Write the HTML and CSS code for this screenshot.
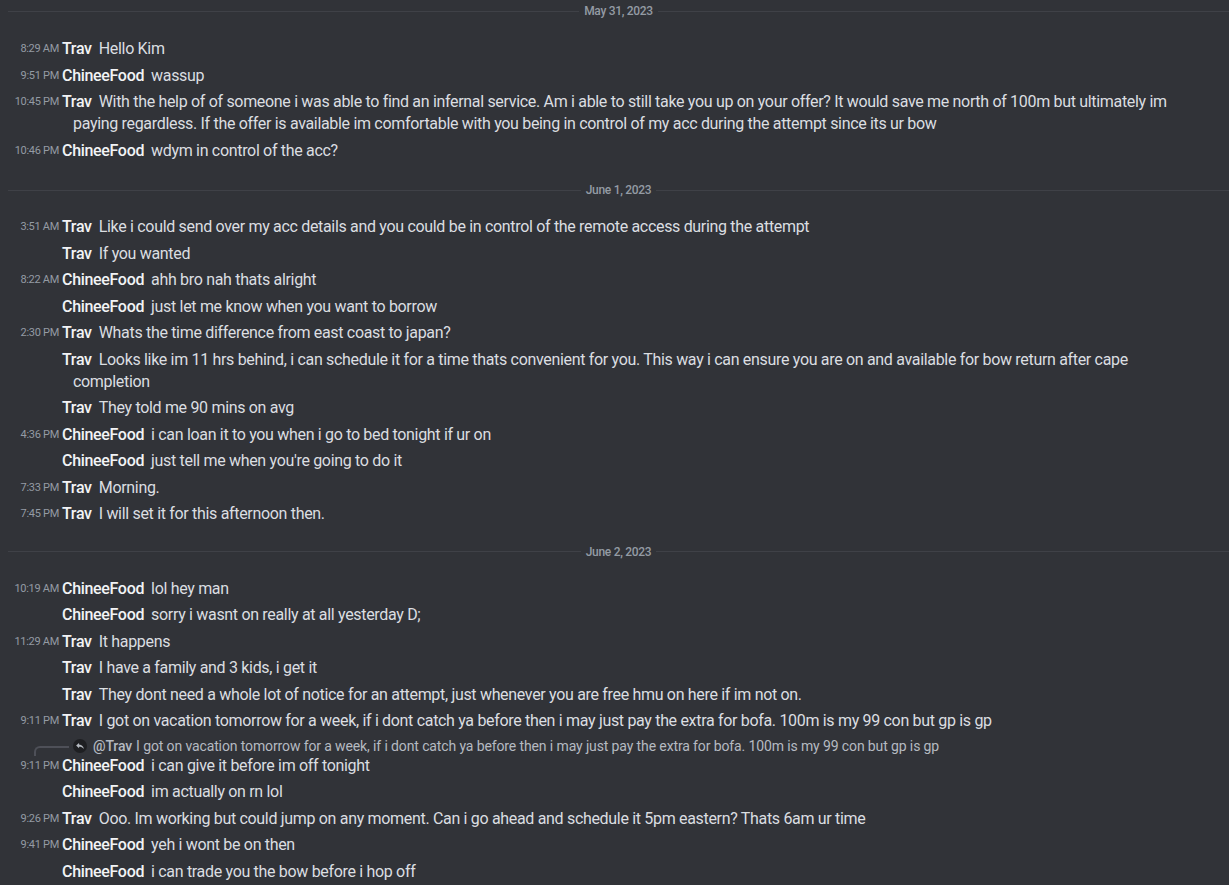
FILE: index.html
```html
<!DOCTYPE html>
<html lang="en">

<head>
    <meta charset="UTF-8">
    <meta name="viewport" content="width=device-width, initial-scale=1.0">
    <title>Trav / ChineeFood</title>
    <link rel="stylesheet" href="styles.css">
</head>

<body>
    <main class="chat">
        <div class="divider first"><span>May 31, 2023</span></div>

        <div class="msg"><time>8:29 AM</time><b class="name">Trav</b>Hello Kim</div>
        <div class="msg"><time>9:51 PM</time><b class="name">ChineeFood</b>wassup</div>
        <div class="msg"><time>10:45 PM</time><b class="name">Trav</b>With the help of of someone i was able to find an infernal service. Am i able to still take you up on your offer? It would save me north of 100m but ultimately im paying regardless. If the offer is available im comfortable with you being in control of my acc during the attempt since its ur bow</div>
        <div class="msg"><time>10:46 PM</time><b class="name">ChineeFood</b>wdym in control of the acc?</div>

        <div class="divider wide"><span>June 1, 2023</span></div>

        <div class="msg"><time>3:51 AM</time><b class="name">Trav</b>Like i could send over my acc details and you could be in control of the remote access during the attempt</div>
        <div class="msg"><time></time><b class="name">Trav</b>If you wanted</div>
        <div class="msg"><time>8:22 AM</time><b class="name">ChineeFood</b>ahh bro nah thats alright</div>
        <div class="msg"><time></time><b class="name">ChineeFood</b>just let me know when you want to borrow</div>
        <div class="msg"><time>2:30 PM</time><b class="name">Trav</b>Whats the time difference from east coast to japan?</div>
        <div class="msg"><time></time><b class="name">Trav</b>Looks like im 11 hrs behind, i can schedule it for a time thats convenient for you. This way i can ensure you are on and available for bow return after cape completion</div>
        <div class="msg"><time></time><b class="name">Trav</b>They told me 90 mins on avg</div>
        <div class="msg"><time>4:36 PM</time><b class="name">ChineeFood</b>i can loan it to you when i go to bed tonight if ur on</div>
        <div class="msg"><time></time><b class="name">ChineeFood</b>just tell me when you're going to do it</div>
        <div class="msg"><time>7:33 PM</time><b class="name">Trav</b>Morning.</div>
        <div class="msg"><time>7:45 PM</time><b class="name">Trav</b>I will set it for this afternoon then.</div>

        <div class="divider"><span>June 2, 2023</span></div>

        <div class="msg"><time>10:19 AM</time><b class="name">ChineeFood</b>lol hey man</div>
        <div class="msg"><time></time><b class="name">ChineeFood</b>sorry i wasnt on really at all yesterday D;</div>
        <div class="msg"><time>11:29 AM</time><b class="name">Trav</b>It happens</div>
        <div class="msg"><time></time><b class="name">Trav</b>I have a family and 3 kids, i get it</div>
        <div class="msg"><time></time><b class="name">Trav</b>They dont need a whole lot of notice for an attempt, just whenever you are free hmu on here if im not on.</div>
        <div class="msg"><time>9:11 PM</time><b class="name">Trav</b>I got on vacation tomorrow for a week, if i dont catch ya before then i may just pay the extra for bofa. 100m is my 99 con but gp is gp</div>
        <div class="msg has-reply">
            <div class="reply">
                <span class="reply-icon">
                    <svg viewBox="0 0 16 16" width="10" height="10"><path d="M6.5 3 1.8 7.3l4.7 4.3V9c3.3 0 5.6.9 7.7 3.6-.7-3.9-3-6.7-7.7-7.1z" fill="currentColor"/></svg>
                </span><b class="reply-name">@Trav</b><span class="reply-text">I got on vacation tomorrow for a week, if i dont catch ya before then i may just pay the extra for bofa. 100m is my 99 con but gp is gp</span>
            </div>
            <div class="line"><time>9:11 PM</time><b class="name">ChineeFood</b>i can give it before im off tonight</div>
        </div>
        <div class="msg"><time></time><b class="name">ChineeFood</b>im actually on rn lol</div>
        <div class="msg"><time>9:26 PM</time><b class="name">Trav</b>Ooo. Im working but could jump on any moment. Can i go ahead and schedule it 5pm eastern? Thats 6am ur time</div>
        <div class="msg"><time>9:41 PM</time><b class="name">ChineeFood</b>yeh i wont be on then</div>
        <div class="msg"><time></time><b class="name">ChineeFood</b>i can trade you the bow before i hop off</div>
    </main>
</body>

</html>
```

FILE: styles.css
```css
body {
    margin: 0;
    background-color: #313338;
    color: #dbdee1;
    font-family: Roboto, "Noto Sans", sans-serif;
    overflow: hidden;
}

.chat {
    padding: 0 44px 0 0;
}

.divider {
    display: flex;
    align-items: center;
    height: 16px;
    margin: 16px -44px 16px 8px;
    color: #949ba4;
    font-size: 12px;
    font-weight: 500;
    letter-spacing: -0.3px;
}

.divider.first {
    margin-top: 3px;
    margin-bottom: 17px;
}

.divider.wide {
    margin-top: 18px;
}

.divider::before,
.divider::after {
    content: "";
    flex: 1;
    height: 1px;
    background-color: #3f4147;
}

.divider span {
    padding: 0 5px;
}

.msg {
    font-size: 16px;
    line-height: 22px;
    letter-spacing: -0.32px;
    padding: 2.25px 0 2.25px 73px;
    text-indent: -73px;
}

.msg.has-reply {
    text-indent: 0;
}

.msg .line {
    text-indent: -73px;
}

.msg time {
    display: inline-block;
    width: 59px;
    margin-right: 3px;
    text-indent: 0;
    text-align: right;
    font-size: 11px;
    letter-spacing: -0.3px;
    color: #949ba4;
    vertical-align: top;
    line-height: 22px;
}

.name {
    color: #f2f3f5;
    font-weight: 500;
    margin-right: 7px;
}

.reply {
    position: relative;
    display: flex;
    align-items: center;
    height: 18px;
    font-size: 14px;
    line-height: 18px;
    letter-spacing: -0.12px;
    color: #b5bac1;
    white-space: nowrap;
}

.reply::before {
    content: "";
    position: absolute;
    left: -39px;
    top: 9px;
    width: 33px;
    height: 8px;
    border-left: 2px solid #4e5058;
    border-top: 2px solid #4e5058;
    border-top-left-radius: 6px;
}

.reply-icon {
    display: inline-flex;
    align-items: center;
    justify-content: center;
    flex: none;
    width: 14px;
    height: 14px;
    border-radius: 50%;
    background-color: #1e1f22;
    color: #b5bac1;
    margin-right: 6px;
}

.reply-name {
    font-weight: 500;
    margin-right: 4px;
}

.reply-text {
    overflow: hidden;
    text-overflow: ellipsis;
}
```
